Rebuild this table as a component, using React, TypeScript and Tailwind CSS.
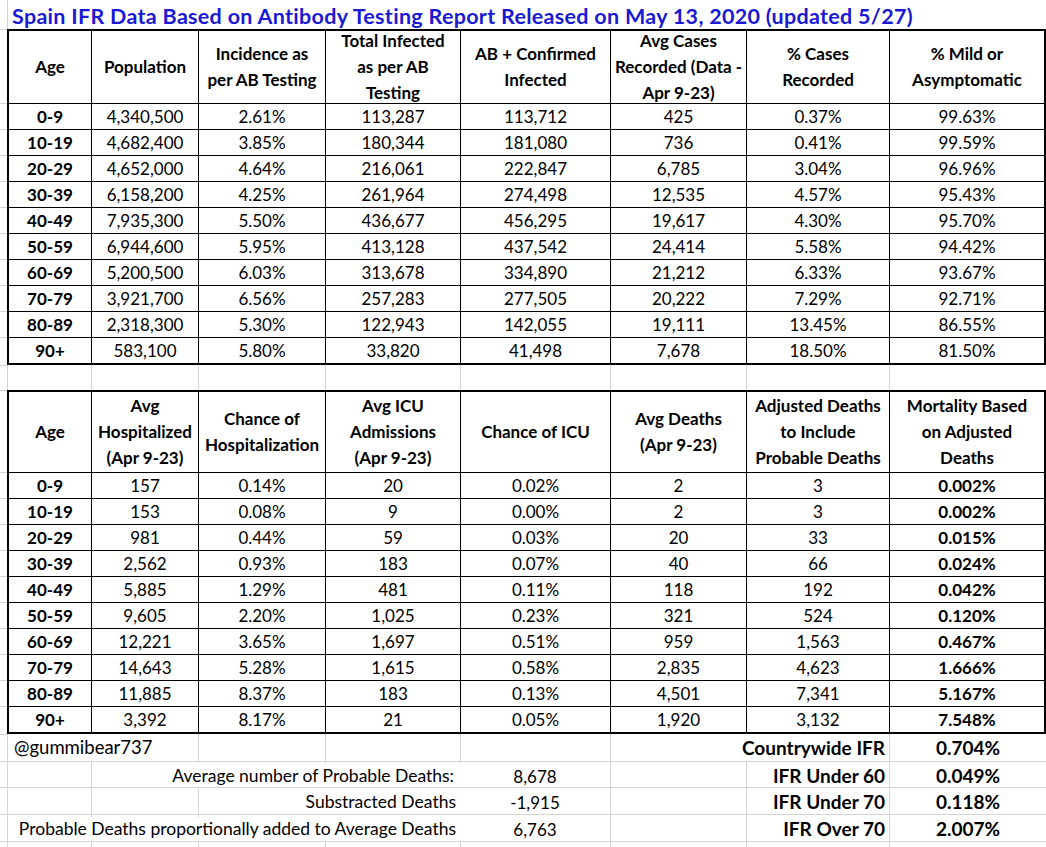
import clsx from "clsx";
import type { ReactNode } from "react";

// spreadsheet columns: A strip, then B..I
const GRID = "grid grid-cols-[7px_84px_107px_127px_135px_150px_136px_143px_157px]";
const GRAY = "border-[#d4d4d4]";

const head1 = [
  ["Age"],
  ["Population"],
  ["Incidence as", "per AB Testing"],
  ["Total Infected", "as per AB", "Testing"],
  ["AB + Confirmed", "Infected"],
  ["Avg Cases", "Recorded (Data -", "Apr 9-23)"],
  ["% Cases", "Recorded"],
  ["% Mild or", "Asymptomatic"],
];

const body1 = [
  ["0-9", "4,340,500", "2.61%", "113,287", "113,712", "425", "0.37%", "99.63%"],
  ["10-19", "4,682,400", "3.85%", "180,344", "181,080", "736", "0.41%", "99.59%"],
  ["20-29", "4,652,000", "4.64%", "216,061", "222,847", "6,785", "3.04%", "96.96%"],
  ["30-39", "6,158,200", "4.25%", "261,964", "274,498", "12,535", "4.57%", "95.43%"],
  ["40-49", "7,935,300", "5.50%", "436,677", "456,295", "19,617", "4.30%", "95.70%"],
  ["50-59", "6,944,600", "5.95%", "413,128", "437,542", "24,414", "5.58%", "94.42%"],
  ["60-69", "5,200,500", "6.03%", "313,678", "334,890", "21,212", "6.33%", "93.67%"],
  ["70-79", "3,921,700", "6.56%", "257,283", "277,505", "20,222", "7.29%", "92.71%"],
  ["80-89", "2,318,300", "5.30%", "122,943", "142,055", "19,111", "13.45%", "86.55%"],
  ["90+", "583,100", "5.80%", "33,820", "41,498", "7,678", "18.50%", "81.50%"],
];

const head2 = [
  ["Age"],
  ["Avg", "Hospitalized", "(Apr 9-23)"],
  ["Chance of", "Hospitalization"],
  ["Avg ICU", "Admissions", "(Apr 9-23)"],
  ["Chance of ICU"],
  ["Avg Deaths", "(Apr 9-23)"],
  ["Adjusted Deaths", "to Include", "Probable Deaths"],
  ["Mortality Based", "on Adjusted", "Deaths"],
];

const body2 = [
  ["0-9", "157", "0.14%", "20", "0.02%", "2", "3", "0.002%"],
  ["10-19", "153", "0.08%", "9", "0.00%", "2", "3", "0.002%"],
  ["20-29", "981", "0.44%", "59", "0.03%", "20", "33", "0.015%"],
  ["30-39", "2,562", "0.93%", "183", "0.07%", "40", "66", "0.024%"],
  ["40-49", "5,885", "1.29%", "481", "0.11%", "118", "192", "0.042%"],
  ["50-59", "9,605", "2.20%", "1,025", "0.23%", "321", "524", "0.120%"],
  ["60-69", "12,221", "3.65%", "1,697", "0.51%", "959", "1,563", "0.467%"],
  ["70-79", "14,643", "5.28%", "1,615", "0.58%", "2,835", "4,623", "1.666%"],
  ["80-89", "11,885", "8.37%", "183", "0.13%", "4,501", "7,341", "5.167%"],
  ["90+", "3,392", "8.17%", "21", "0.05%", "1,920", "3,132", "7.548%"],
];

const sideBorder = (i: number) =>
  i === 0 ? "border-l-2" : i === 7 ? "border-l border-r-2" : "border-l";

function HeadRow({ cols, h }: { cols: string[][]; h: string }) {
  return (
    <div className={clsx(GRID, h)}>
      <div className={clsx("border-t", GRAY)} />
      {cols.map((lines, i) => (
        <div
          key={i}
          className={clsx(
            "flex flex-col justify-center overflow-hidden border-t-2 border-black px-[2px] font-bold leading-[26px]",
            sideBorder(i)
          )}
        >
          {lines.map((l) => (
            <div key={l} className="whitespace-nowrap text-center">
              {l}
            </div>
          ))}
        </div>
      ))}
    </div>
  );
}

function BodyRow({ vals, last, boldLast }: { vals: string[]; last: boolean; boldLast?: boolean }) {
  return (
    <div className={clsx(GRID, last ? "h-[28px]" : "h-[26px]")}>
      <div className={clsx("border-t", GRAY)} />
      {vals.map((v, i) => (
        <div
          key={i}
          className={clsx(
            "flex items-center justify-center overflow-hidden whitespace-nowrap border-t border-black",
            last && "border-b-2",
            sideBorder(i),
            (i === 0 || (boldLast && i === 7)) && "font-bold"
          )}
        >
          {v}
        </div>
      ))}
    </div>
  );
}

const spans: Record<number, string> = { 1: "", 2: "col-span-2", 3: "col-span-3", 4: "col-span-4", 8: "col-span-8" };

function Cell({
  span = 1,
  line = true,
  top = true,
  className,
  children,
}: {
  span?: number;
  line?: boolean;
  top?: boolean;
  className?: string;
  children?: ReactNode;
}) {
  return (
    <div
      className={clsx(
        "flex items-center overflow-visible whitespace-nowrap",
        GRAY,
        spans[span],
        line && "border-l",
        top && "border-t",
        className
      )}
    >
      {children}
    </div>
  );
}

function Table({ head, body, headH, boldLast }: { head: string[][]; body: string[][]; headH: string; boldLast?: boolean }) {
  return (
    <div>
      <HeadRow cols={head} h={headH} />
      {body.map((r, i) => (
        <BodyRow key={r[0]} vals={r} last={i === body.length - 1} boldLast={boldLast} />
      ))}
    </div>
  );
}

export default function App() {
  return (
    <div className="h-[847px] w-[1046px] overflow-hidden bg-white font-[Lato,sans-serif] text-[17px] text-black">
      {/* title row */}
      <div className={clsx(GRID, "h-[29px]")}>
        <div />
        <Cell span={8} top={false} className="pl-[4px] text-[21.5px] font-bold tracking-[0.3px] text-[#1a1ad4]">
          Spain IFR Data Based on Antibody Testing Report Released on May 13, 2020 (updated 5/27)
        </Cell>
      </div>

      <Table head={head1} body={body1} headH="h-[74px]" />

      {/* blank row */}
      <div className={clsx(GRID, "h-[25px]")}>
        <Cell line={false} />
        {[0, 1, 2, 3, 4, 5, 6, 7].map((i) => (
          <Cell key={i} top={false} />
        ))}
      </div>

      <Table head={head2} body={body2} headH="h-[82px]" boldLast />

      {/* footer notes */}
      <div className={clsx(GRID, "h-[27px]")}>
        <Cell line={false} />
        <Cell span={2} top={false} className="pl-[6px] text-[18.5px]">
          @gummibear737
        </Cell>
        <Cell top={false} />
        <Cell top={false} />
        <Cell top={false} />
        <Cell span={2} top={false} className="justify-end pr-[4px] text-[19px] font-bold">
          Countrywide IFR
        </Cell>
        <Cell top={false} className="justify-center text-[19px] font-bold">
          0.704%
        </Cell>
      </div>
      <div className={clsx(GRID, "h-[26px]")}>
        <Cell line={false} />
        <Cell />
        <Cell span={3} className="justify-end pr-[6px] text-[17.5px]">
          Average number of Probable Deaths:
        </Cell>
        <Cell line={false} className="justify-center">
          8,678
        </Cell>
        <Cell />
        <Cell className="justify-end pr-[4px] text-[19px] font-bold">IFR Under 60</Cell>
        <Cell className="justify-center text-[19px] font-bold">0.049%</Cell>
      </div>
      <div className={clsx(GRID, "h-[27px]")}>
        <Cell line={false} />
        <Cell />
        <Cell />
        <Cell span={2} className="justify-end pr-[4px] text-[17.5px]">
          Substracted Deaths
        </Cell>
        <Cell line={false} className="justify-center">
          -1,915
        </Cell>
        <Cell />
        <Cell className="justify-end pr-[4px] text-[19px] font-bold">IFR Under 70</Cell>
        <Cell className="justify-center text-[19px] font-bold">0.118%</Cell>
      </div>
      <div className={clsx(GRID, "h-[27px]")}>
        <Cell line={false} />
        <Cell span={4} className="justify-end pr-[4px] text-[17.5px]">
          Probable Deaths proportionally added to Average Deaths
        </Cell>
        <Cell line={false} className="justify-center">
          6,763
        </Cell>
        <Cell />
        <Cell className="justify-end pr-[4px] text-[19px] font-bold">IFR Over 70</Cell>
        <Cell className="justify-center text-[19px] font-bold">2.007%</Cell>
      </div>
      <div className={clsx(GRID, "h-[30px]")}>
        <Cell line={false} />
        {[0, 1, 2, 3, 4, 5, 6, 7].map((i) => (
          <Cell key={i} />
        ))}
      </div>
    </div>
  );
}
